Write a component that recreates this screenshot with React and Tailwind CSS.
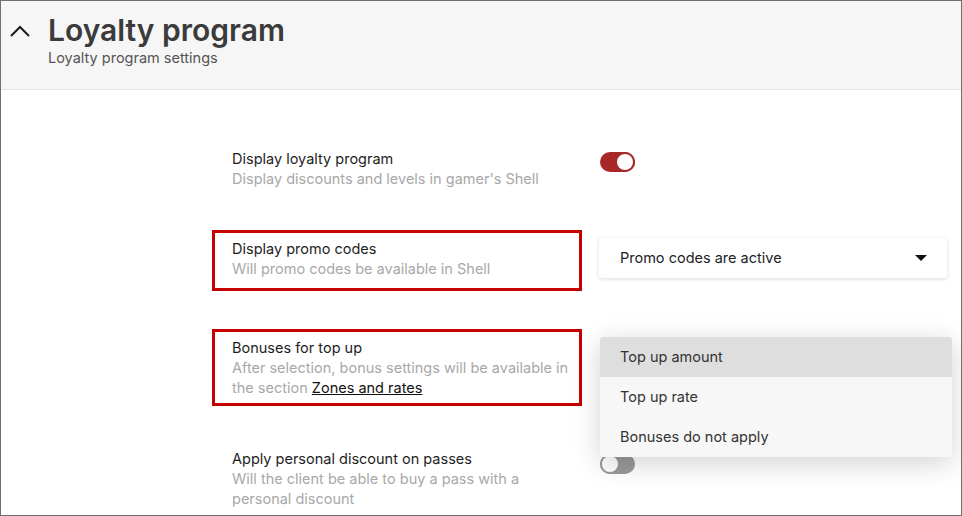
export default function App() {
  return (
    <div
      className="relative w-[962px] h-[516px] overflow-hidden border border-[#707070] bg-white text-[14.5px]"
      style={{ fontFamily: "Inter, 'Noto Sans', sans-serif" }}
    >
      {/* header */}
      <div className="h-[89px] bg-[#f6f6f6] border-b border-[#e6e6e6] flex">
        <svg width="22" height="14" viewBox="0 0 22 14" className="mt-[23px] ml-[8px]">
          <polyline points="2,12 11,3 20,12" fill="none" stroke="#1c1c1c" strokeWidth="2" />
        </svg>
        <div className="ml-[17px]">
          <h1 className="text-[30px] leading-[40px] font-semibold text-[#3b3b3b] mt-[9px]">
            Loyalty program
          </h1>
          <p className="leading-[20px] text-[#555] mt-[-2px]">Loyalty program settings</p>
        </div>
      </div>

      {/* settings */}
      <div className="pl-[211px] pt-[50px] flex flex-col">
        <div className="flex">
          <div className="w-[370px] border-[3px] border-transparent pl-[17px] pr-[6px] pt-[6px] pb-[9px]">
            <div className="leading-[20px] text-[#1e1e1e]">Display loyalty program</div>
            <div className="leading-[20px] text-[#a8a8a8]">Display discounts and levels in gamer's Shell</div>
          </div>
          <div className="ml-[18px] mt-[12px]">
            <Toggle on />
          </div>
        </div>

        <div className="flex mt-[29px]">
          <div className="w-[370px] border-[3px] border-[#c40000] pl-[17px] pr-[6px] pt-[6px] pb-[9px]">
            <div className="leading-[20px] text-[#1e1e1e]">Display promo codes</div>
            <div className="leading-[20px] text-[#a8a8a8]">Will promo codes be available in Shell</div>
          </div>
          <div className="ml-[17px] mt-[8px] w-[348px] h-[40px] bg-white rounded-[3px] shadow-[0_1px_4px_rgba(0,0,0,0.15)] flex items-center justify-between pl-[21px] pr-[20px]">
            <span className="text-[#222]">Promo codes are active</span>
            <svg width="12" height="6" viewBox="0 0 12 6">
              <polygon points="0,0 12,0 6,6" fill="#111" />
            </svg>
          </div>
        </div>

        <div className="flex mt-[38px]">
          <div className="w-[370px] border-[3px] border-[#c40000] pl-[17px] pr-[6px] pt-[6px] pb-[5px]">
            <div className="leading-[20px] text-[#1e1e1e]">Bonuses for top up</div>
            <div className="leading-[20px] text-[#a8a8a8]">
              After selection, bonus settings will be available in the section{" "}
              <span className="text-[#111] underline underline-offset-[1px]">Zones and rates</span>
            </div>
          </div>
        </div>

        <div className="flex mt-[34px]">
          <div className="w-[370px] border-[3px] border-transparent pl-[17px] pr-[6px] pt-[6px] pb-[9px]">
            <div className="leading-[20px] text-[#1e1e1e]">Apply personal discount on passes</div>
            <div className="leading-[20px] text-[#a8a8a8]">
              Will the client be able to buy a pass with a personal discount
            </div>
          </div>
          <div className="ml-[18px] mt-[14px]">
            <Toggle />
          </div>
        </div>
      </div>

      {/* open dropdown */}
      <div className="absolute left-[599px] top-[336px] w-[352px] rounded-[4px] bg-[#f7f7f7] overflow-hidden shadow-[0_6px_28px_rgba(0,0,0,0.18)]">
        <div className="h-[40px] flex items-center pl-[20px] bg-[#dedede] text-[#333]">Top up amount</div>
        <div className="h-[40px] flex items-center pl-[20px] text-[#333]">Top up rate</div>
        <div className="h-[40px] flex items-center pl-[20px] text-[#333]">Bonuses do not apply</div>
      </div>
    </div>
  );
}

function Toggle({ on = false }) {
  return (
    <div
      className={
        on
          ? "w-[35px] h-[20px] rounded-full bg-[#a82828] flex justify-end"
          : "w-[35px] h-[20px] rounded-full bg-[#9a9a9a] flex justify-start"
      }
    >
      <div
        className={
          on
            ? "w-[20px] h-[20px] rounded-full bg-white border-2 border-[#a82828]"
            : "w-[20px] h-[20px] rounded-full bg-white border-2 border-[#9a9a9a]"
        }
      />
    </div>
  );
}
